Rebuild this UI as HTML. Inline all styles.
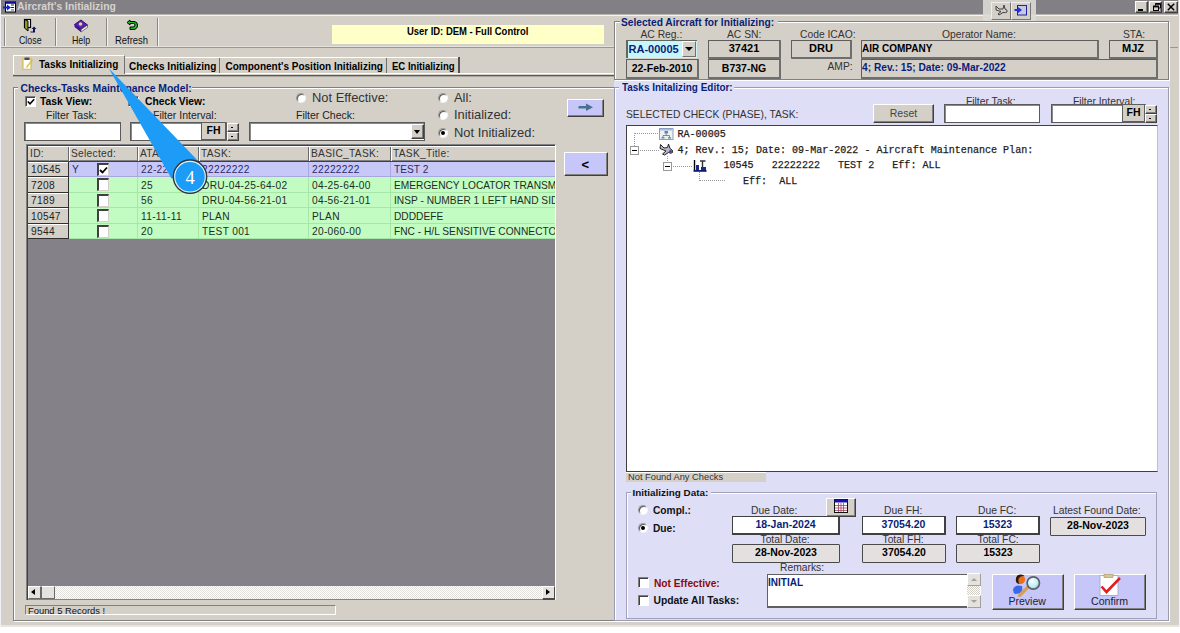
<!DOCTYPE html>
<html><head><meta charset="utf-8">
<style>
*{margin:0;padding:0;box-sizing:border-box}
html,body{width:1180px;height:633px;overflow:hidden;background:#fff;font-family:"Liberation Sans",sans-serif;font-size:10px;color:#000}
.a{position:absolute}
.win{left:0;top:0;width:1179px;height:627px;background:#D4D0C8;border-bottom:2px solid #E8E6E2}
.t{position:absolute;white-space:pre;line-height:1}
.b{font-weight:bold}
.nav{color:#0A1E78}
.etch-h{position:absolute;height:2px;border-top:1px solid #808080;border-bottom:1px solid #fff}
.etch-v{position:absolute;width:2px;border-left:1px solid #8A8884;border-right:1px solid #F4F2EE}
.sunk{position:absolute;background:#fff;border:1px solid #5A5A5A;box-shadow:inset 1px 1px 0 #8A8A8A}
.ro{position:absolute;background:#D4D0C8;border:1px solid #5E5E5E;border-right:2px solid #6E6E6E;border-bottom:2px solid #6E6E6E;border-radius:1px;text-align:center;font-weight:bold;font-size:11px;white-space:pre}
.btn{position:absolute;background:#D4D0C8;border-top:1px solid #fff;border-left:1px solid #fff;border-right:1px solid #404040;border-bottom:1px solid #404040;box-shadow:inset -1px -1px 0 #808080}
.rad{position:absolute;width:10px;height:10px;border-radius:50%;background:#fff;border:1px solid #9A9A9A;border-right-color:#F4F4F4;border-bottom-color:#F4F4F4;box-shadow:inset 1px 1px 0 #5A5A5A}
.dot{position:absolute;left:2px;top:2px;width:4px;height:4px;border-radius:50%;background:#000}
.gt{font-size:10.2px;letter-spacing:.3px}
.lab{font-size:10.3px;color:#333}
.mono{font-family:"Liberation Mono",monospace;font-size:10.05px;color:#111;font-weight:normal;-webkit-text-stroke:0.25px #333}
.dv{background:repeating-linear-gradient(#999 0 1px,transparent 1px 2px)}
.dh{background:repeating-linear-gradient(90deg,#999 0 1px,transparent 1px 2px)}
.mb{width:9px;height:9px;background:#fff;border:1px solid #999}
.mb::after{content:"";position:absolute;left:1px;top:3px;width:5px;height:1px;background:#000}
.wb{position:absolute;background:#fff;border:1px solid #404040;border-bottom-width:2px;border-right-width:2px;text-align:center;font-weight:bold;font-size:10.5px;line-height:15px}
.cb{position:absolute;width:11px;height:11px;background:#fff;border-top:1px solid #808080;border-left:1px solid #808080;border-bottom:1px solid #fff;border-right:1px solid #fff;box-shadow:inset 1px 1px 0 #404040}
.wbtn{position:absolute;width:13px;height:12px;background:#D4D0C8;border-top:1px solid #fff;border-left:1px solid #fff;border-right:1px solid #404040;border-bottom:1px solid #404040;box-shadow:inset -1px -1px 0 #808080}
.tb{font-size:10.5px;color:#111;transform-origin:0 0}
.lbtn{position:absolute;background:#C6C6F8;border-top:1px solid #fff;border-left:1px solid #fff;border-right:1px solid #404040;border-bottom:1px solid #404040;box-shadow:inset -1px -1px 0 #808080}
</style></head><body>
<div class="a win">

<!-- TITLE BAR -->
<div class="a" style="left:1px;top:0;width:1177px;height:14px;background:#828085"></div><div class="a" style="left:1px;top:14px;width:1177px;height:1px;background:#B8B6B2"></div>
<div class="a" style="left:0;top:0;width:1px;height:627px;background:#F0F0F8"></div><div class="a" style="left:1179px;top:15px;width:1px;height:612px;background:#F4F4F8"></div>
<div class="t b" style="left:17px;top:2px;font-size:10.4px;color:#D6D3CE">Aircraft's Initializing</div>

<!-- TOOLBAR -->
<div class="a" style="left:1px;top:15px;width:1177px;height:1px;background:#F4F4F2"></div>
<div class="etch-v" style="left:4px;top:18px;height:28px"></div>
<div class="etch-v" style="left:55px;top:18px;height:28px"></div>
<div class="etch-v" style="left:106px;top:18px;height:28px"></div>
<div class="etch-v" style="left:157px;top:18px;height:28px"></div>
<div class="a" style="left:1px;top:46px;width:613px;height:1px;background:#E4E2DC"></div><div class="a" style="left:1px;top:47px;width:613px;height:1px;background:#9C9890"></div>
<div class="t tb" style="left:18.5px;top:34.5px;transform:scaleX(.84)">Close</div>
<div class="t tb" style="left:72px;top:34.5px;transform:scaleX(.84)">Help</div>
<div class="t tb" style="left:115px;top:34.5px;transform:scaleX(.9)">Refresh</div>

<!-- user id -->
<div class="a" style="left:332px;top:25px;width:272px;height:19px;background:#FFFFC8"></div>
<div class="t b" style="left:407px;top:27px;font-size:10px;transform:scaleX(.946);transform-origin:0 0">User ID: DEM - Full Control</div>

<!-- TABS -->
<div class="a" style="left:125px;top:57px;width:334px;height:1px;background:#fff"></div>
<div class="a" style="left:219px;top:58px;width:1px;height:15px;background:#6E6E6E"></div>
<div class="a" style="left:386px;top:58px;width:1px;height:15px;background:#6E6E6E"></div>
<div class="a" style="left:458px;top:57px;width:2px;height:16px;background:#505050"></div>
<div class="a" style="left:13px;top:73px;width:601px;height:1px;background:#fff"></div>
<div class="a" style="left:13px;top:75px;width:601px;height:1px;background:#5A5A5A"></div>
<div class="a" style="left:13px;top:76px;width:601px;height:1px;background:#A8A6A0"></div>
<div class="a" style="left:13px;top:55px;width:112px;height:19px;background:#D4D0C8;border-top:1px solid #fff;border-left:1px solid #fff;border-right:1px solid #707070"></div>
<div class="t b" style="left:39px;top:60px;font-size:10px">Tasks Initializing</div>
<div class="t b" style="left:129px;top:62px;font-size:10px">Checks Initializing</div>
<div class="t b" style="left:225.5px;top:62px;font-size:10px">Component's Position Initializing</div>
<div class="t b" style="left:391.5px;top:62px;font-size:10px;transform:scaleX(.955);transform-origin:0 0">EC Initializing</div>

<!-- LEFT GROUP -->
<div class="a" style="left:13px;top:87px;width:602px;height:534px;border:1px solid #808080;box-shadow:inset 1px 1px 0 #fff, 1px 1px 0 #fff"></div>
<div class="a" style="left:18px;top:81px;width:174px;height:12px;background:#D4D0C8"></div>
<div class="t b nav" style="left:20.5px;top:83.5px;font-size:10.4px">Checks-Tasks Maintenance Model:</div>


<!-- LEFT CONTROLS -->
<div class="cb" style="left:25px;top:96px"></div>
<svg class="a" style="left:27px;top:98px" width="8" height="8" viewBox="0 0 8 8"><path d="M0.8 3.5 L3 5.8 L7.2 1.2" stroke="#000" stroke-width="1.6" fill="none"/></svg>
<div class="t b" style="left:40px;top:97px;font-size:10.3px">Task View:</div>
<div class="cb" style="left:128px;top:96px"></div>
<div class="t b" style="left:145px;top:97px;font-size:10.3px">Check View:</div>
<div class="t" style="left:46px;top:110px;font-size:10.5px;color:#222">Filter Task:</div>
<div class="t" style="left:153px;top:110px;font-size:10.5px;color:#222">Filter Interval:</div>
<div class="t" style="left:296px;top:110px;font-size:10.5px;color:#222">Filter Check:</div>
<div class="sunk" style="left:24px;top:122px;width:97px;height:19px"></div>
<div class="sunk" style="left:130px;top:122px;width:72px;height:19px"></div>
<div class="ro" style="left:201px;top:122px;width:26px;height:19px;font-size:10.5px;line-height:15px;border-color:#5E5E5E">FH</div>
<div class="btn" style="left:227px;top:123px;width:12px;height:9px"></div>
<div class="btn" style="left:227px;top:132px;width:12px;height:9px"></div>
<div class="sunk" style="left:249px;top:122px;width:176px;height:19px"></div>
<div class="btn" style="left:411px;top:124px;width:13px;height:15px"></div>
<div class="a" style="left:414px;top:130px;width:0;height:0;border-left:3.5px solid transparent;border-right:3.5px solid transparent;border-top:4px solid #000"></div>

<!-- radios -->
<div class="rad" style="left:296px;top:93px"></div>
<div class="t" style="left:312px;top:92px;font-size:12.9px;color:#333">Not Effective:</div>
<div class="rad" style="left:438px;top:93px"></div>
<div class="t" style="left:454px;top:92px;font-size:12.9px;color:#333">All:</div>
<div class="rad" style="left:438px;top:110px"></div>
<div class="t" style="left:454px;top:109px;font-size:12.9px;color:#333">Initialized:</div>
<div class="rad" style="left:438px;top:128px"><div class="dot"></div></div>
<div class="t" style="left:454px;top:127px;font-size:12.9px;color:#333">Not Initialized:</div>

<div class="lbtn" style="left:567px;top:99px;width:37px;height:18px"></div>
<div class="lbtn" style="left:564px;top:152px;width:44px;height:24px"></div>
<div class="t b" style="left:581.5px;top:157.5px;font-size:13px">&lt;</div>

<!-- GRID -->
<div class="a" style="left:26px;top:144px;width:530px;height:456px;background:#848288;border-top:1px solid #808080;border-left:1px solid #808080;border-right:1px solid #fff;box-shadow:inset 1px 1px 0 #404040"></div>
<div class="a" style="left:28px;top:146px;width:527px;height:93px;overflow:hidden">
<div class="a" style="left:0;top:0;width:528px;height:16px;background:#D4D0C8;border-top:1px solid #fff;border-bottom:1px solid #404040;box-shadow:inset 0 -1px 0 #808080"></div>
<div class="t gt" style="left:2px;top:3px;color:#333">ID:</div>
<div class="a" style="left:40px;top:1px;width:1px;height:14px;background:#6A6A6A"></div>
<div class="a" style="left:41px;top:1px;width:1px;height:14px;background:#fff"></div>
<div class="t gt" style="left:43px;top:3px;color:#333">Selected:</div>
<div class="a" style="left:109px;top:1px;width:1px;height:14px;background:#6A6A6A"></div>
<div class="a" style="left:110px;top:1px;width:1px;height:14px;background:#fff"></div>
<div class="t gt" style="left:112px;top:3px;color:#333">ATA:</div>
<div class="a" style="left:170px;top:1px;width:1px;height:14px;background:#6A6A6A"></div>
<div class="a" style="left:171px;top:1px;width:1px;height:14px;background:#fff"></div>
<div class="t gt" style="left:173px;top:3px;color:#333">TASK:</div>
<div class="a" style="left:280px;top:1px;width:1px;height:14px;background:#6A6A6A"></div>
<div class="a" style="left:281px;top:1px;width:1px;height:14px;background:#fff"></div>
<div class="t gt" style="left:283px;top:3px;color:#333">BASIC_TASK:</div>
<div class="a" style="left:362px;top:1px;width:1px;height:14px;background:#6A6A6A"></div>
<div class="a" style="left:363px;top:1px;width:1px;height:14px;background:#fff"></div>
<div class="t gt" style="left:365px;top:3px;color:#333">TASK_Title:</div>
<div class="a" style="left:0;top:16px;width:41px;height:15px;background:#D4D0C8;border-bottom:1px solid #303030;border-right:1px solid #303030;box-shadow:inset 0 1px 0 #fff"></div>
<div class="a" style="left:41px;top:16px;width:487px;height:15px;background:#C8C8F8;border-bottom:1px solid #A8A8E0"></div>
<div class="a" style="left:109px;top:16px;width:1px;height:15px;background:#A8A8E0"></div>
<div class="a" style="left:170px;top:16px;width:1px;height:15px;background:#A8A8E0"></div>
<div class="a" style="left:280px;top:16px;width:1px;height:15px;background:#A8A8E0"></div>
<div class="a" style="left:362px;top:16px;width:1px;height:15px;background:#A8A8E0"></div>
<div class="t gt" style="left:3px;top:19px;color:#222">10545</div>
<div class="t gt" style="left:44px;top:19px;color:#2A2A66">Y</div>
<div class="a" style="left:69px;top:17px;width:12px;height:13px;background:#fff;border-top:2px solid #404040;border-left:2px solid #404040;border-right:1px solid #D4D0C8;border-bottom:1px solid #D4D0C8"></div>
<svg class="a" style="left:71px;top:19.5px" width="9" height="9" viewBox="0 0 9 9"><path d="M1 4 L3.5 6.5 L8 1.5" stroke="#000" stroke-width="1.8" fill="none"/></svg>
<div class="t gt" style="left:113px;top:19px;width:57px;overflow:hidden;color:#2A2A66">22-22-22</div>
<div class="t gt" style="left:174px;top:19px;width:106px;overflow:hidden;color:#2A2A66">22222222</div>
<div class="t gt" style="left:284px;top:19px;width:78px;overflow:hidden;color:#2A2A66">22222222</div>
<div class="t gt" style="left:366px;top:19px;width:162px;overflow:hidden;letter-spacing:0;color:#2A2A66">TEST 2</div>
<div class="a" style="left:0;top:31px;width:41px;height:16px;background:#D4D0C8;border-bottom:1px solid #303030;border-right:1px solid #303030;box-shadow:inset 0 1px 0 #fff"></div>
<div class="a" style="left:41px;top:31px;width:487px;height:16px;background:#C2FCC2;border-bottom:1px solid #A6E6A6"></div>
<div class="a" style="left:109px;top:31px;width:1px;height:16px;background:#A6E6A6"></div>
<div class="a" style="left:170px;top:31px;width:1px;height:16px;background:#A6E6A6"></div>
<div class="a" style="left:280px;top:31px;width:1px;height:16px;background:#A6E6A6"></div>
<div class="a" style="left:362px;top:31px;width:1px;height:16px;background:#A6E6A6"></div>
<div class="t gt" style="left:3px;top:34.5px;color:#222">7208</div>
<div class="a" style="left:69px;top:32px;width:12px;height:13px;background:#fff;border-top:2px solid #404040;border-left:2px solid #404040;border-right:1px solid #D4D0C8;border-bottom:1px solid #D4D0C8"></div>
<div class="t gt" style="left:113px;top:34.5px;width:57px;overflow:hidden;color:#1E2E1E">25</div>
<div class="t gt" style="left:174px;top:34.5px;width:106px;overflow:hidden;color:#1E2E1E">DRU-04-25-64-02</div>
<div class="t gt" style="left:284px;top:34.5px;width:78px;overflow:hidden;color:#1E2E1E">04-25-64-00</div>
<div class="t gt" style="left:366px;top:34.5px;width:162px;overflow:hidden;letter-spacing:0;color:#1E2E1E">EMERGENCY LOCATOR TRANSMITTER</div>
<div class="a" style="left:0;top:47px;width:41px;height:15px;background:#D4D0C8;border-bottom:1px solid #303030;border-right:1px solid #303030;box-shadow:inset 0 1px 0 #fff"></div>
<div class="a" style="left:41px;top:47px;width:487px;height:15px;background:#C2FCC2;border-bottom:1px solid #A6E6A6"></div>
<div class="a" style="left:109px;top:47px;width:1px;height:15px;background:#A6E6A6"></div>
<div class="a" style="left:170px;top:47px;width:1px;height:15px;background:#A6E6A6"></div>
<div class="a" style="left:280px;top:47px;width:1px;height:15px;background:#A6E6A6"></div>
<div class="a" style="left:362px;top:47px;width:1px;height:15px;background:#A6E6A6"></div>
<div class="t gt" style="left:3px;top:50px;color:#222">7189</div>
<div class="a" style="left:69px;top:48px;width:12px;height:13px;background:#fff;border-top:2px solid #404040;border-left:2px solid #404040;border-right:1px solid #D4D0C8;border-bottom:1px solid #D4D0C8"></div>
<div class="t gt" style="left:113px;top:50px;width:57px;overflow:hidden;color:#1E2E1E">56</div>
<div class="t gt" style="left:174px;top:50px;width:106px;overflow:hidden;color:#1E2E1E">DRU-04-56-21-01</div>
<div class="t gt" style="left:284px;top:50px;width:78px;overflow:hidden;color:#1E2E1E">04-56-21-01</div>
<div class="t gt" style="left:366px;top:50px;width:162px;overflow:hidden;letter-spacing:0;color:#1E2E1E">INSP - NUMBER 1 LEFT HAND SIDE</div>
<div class="a" style="left:0;top:62px;width:41px;height:16px;background:#D4D0C8;border-bottom:1px solid #303030;border-right:1px solid #303030;box-shadow:inset 0 1px 0 #fff"></div>
<div class="a" style="left:41px;top:62px;width:487px;height:16px;background:#C2FCC2;border-bottom:1px solid #A6E6A6"></div>
<div class="a" style="left:109px;top:62px;width:1px;height:16px;background:#A6E6A6"></div>
<div class="a" style="left:170px;top:62px;width:1px;height:16px;background:#A6E6A6"></div>
<div class="a" style="left:280px;top:62px;width:1px;height:16px;background:#A6E6A6"></div>
<div class="a" style="left:362px;top:62px;width:1px;height:16px;background:#A6E6A6"></div>
<div class="t gt" style="left:3px;top:65.5px;color:#222">10547</div>
<div class="a" style="left:69px;top:63px;width:12px;height:13px;background:#fff;border-top:2px solid #404040;border-left:2px solid #404040;border-right:1px solid #D4D0C8;border-bottom:1px solid #D4D0C8"></div>
<div class="t gt" style="left:113px;top:65.5px;width:57px;overflow:hidden;color:#1E2E1E">11-11-11</div>
<div class="t gt" style="left:174px;top:65.5px;width:106px;overflow:hidden;color:#1E2E1E">PLAN</div>
<div class="t gt" style="left:284px;top:65.5px;width:78px;overflow:hidden;color:#1E2E1E">PLAN</div>
<div class="t gt" style="left:366px;top:65.5px;width:162px;overflow:hidden;letter-spacing:0;color:#1E2E1E">DDDDEFE</div>
<div class="a" style="left:0;top:78px;width:41px;height:15px;background:#D4D0C8;border-bottom:1px solid #303030;border-right:1px solid #303030;box-shadow:inset 0 1px 0 #fff"></div>
<div class="a" style="left:41px;top:78px;width:487px;height:15px;background:#C2FCC2;border-bottom:1px solid #A6E6A6"></div>
<div class="a" style="left:109px;top:78px;width:1px;height:15px;background:#A6E6A6"></div>
<div class="a" style="left:170px;top:78px;width:1px;height:15px;background:#A6E6A6"></div>
<div class="a" style="left:280px;top:78px;width:1px;height:15px;background:#A6E6A6"></div>
<div class="a" style="left:362px;top:78px;width:1px;height:15px;background:#A6E6A6"></div>
<div class="t gt" style="left:3px;top:81px;color:#222">9544</div>
<div class="a" style="left:69px;top:79px;width:12px;height:13px;background:#fff;border-top:2px solid #404040;border-left:2px solid #404040;border-right:1px solid #D4D0C8;border-bottom:1px solid #D4D0C8"></div>
<div class="t gt" style="left:113px;top:81px;width:57px;overflow:hidden;color:#1E2E1E">20</div>
<div class="t gt" style="left:174px;top:81px;width:106px;overflow:hidden;color:#1E2E1E">TEST 001</div>
<div class="t gt" style="left:284px;top:81px;width:78px;overflow:hidden;color:#1E2E1E">20-060-00</div>
<div class="t gt" style="left:366px;top:81px;width:162px;overflow:hidden;letter-spacing:0;color:#1E2E1E">FNC - H/L SENSITIVE CONNECTOR</div>
</div>
<div class="a" style="left:28px;top:586px;width:527px;height:13px;background:repeating-conic-gradient(#fff 0 25%, #E2E0DC 0 50%) 0 0/2px 2px"></div>
<div class="a" style="left:28px;top:586px;width:13px;height:13px;background:#E4E2DE;border-right:1px solid #6A6A6A;border-bottom:1px solid #6A6A6A;border-top:1px solid #fff;border-left:1px solid #fff"></div>
<div class="a" style="left:31px;top:589px;width:0;height:0;border-top:3.5px solid transparent;border-bottom:3.5px solid transparent;border-right:4px solid #000"></div>
<div class="a" style="left:41px;top:586px;width:14px;height:13px;background:#E4E2DE;border-right:1px solid #6A6A6A;border-bottom:1px solid #6A6A6A;border-left:1px solid #6A6A6A;border-top:1px solid #fff"></div>
<div class="a" style="left:542px;top:586px;width:13px;height:14px;background:#E4E2DE;border-right:1px solid #4A4A4A;border-bottom:2px solid #4A4A4A;border-top:1px solid #fff;border-left:1px solid #fff"></div>
<div class="a" style="left:546px;top:589px;width:0;height:0;border-top:3.5px solid transparent;border-bottom:3.5px solid transparent;border-left:4px solid #000"></div>
<div class="a" style="left:25px;top:605px;width:311px;height:10px;background:#D4D0C8;border-top:1px solid #808080;border-left:1px solid #808080;border-bottom:1px solid #fff;border-right:1px solid #fff"></div>
<div class="t" style="left:28px;top:605.5px;font-size:9.4px;color:#111">Found 5 Records !</div>

<!-- RIGHT TOP GROUP -->
<div class="a" style="left:614px;top:21px;width:555px;height:59px;border:1px solid #808080;box-shadow:inset 1px 1px 0 #fff, 1px 1px 0 #fff"></div>
<div class="a" style="left:620px;top:16px;width:158px;height:12px;background:#D4D0C8"></div>
<div class="t b nav" style="left:621px;top:18px;font-size:10.2px">Selected Aircraft for Initializing:</div>
<div class="t lab" style="left:640.5px;top:30px">AC Reg.:</div>
<div class="t lab" style="left:727px;top:30px">AC SN:</div>
<div class="t lab" style="left:800px;top:30px">Code ICAO:</div>
<div class="t lab" style="left:942px;top:30px">Operator Name:</div>
<div class="t lab" style="left:1123px;top:30px">STA:</div>
<div class="t lab" style="left:827.5px;top:62px">AMP:</div>
<div class="a" style="left:626px;top:40px;width:71px;height:18px;background:#C8F6FF;border-top:1px solid #606860;border-left:2px solid #606860"></div>
<div class="a" style="left:682px;top:41px;width:14px;height:16px;background:#D4D0C8;border-top:1px solid #fff;border-left:1px solid #fff;border-right:1px solid #707070;border-bottom:1px solid #707070"></div>
<div class="a" style="left:685px;top:47px;width:0;height:0;border-left:4px solid transparent;border-right:4px solid transparent;border-top:4px solid #000"></div>
<div class="t b nav" style="left:628.5px;top:44px;font-size:11px">RA-00005</div>
<div class="ro" style="left:708px;top:40px;width:73px;height:19px;line-height:15px">37421</div>
<div class="ro" style="left:791px;top:40px;width:61px;height:19px;line-height:15px">DRU</div>
<div class="ro" style="left:861px;top:40px;width:238px;height:19px;line-height:15px;text-align:left;padding-left:0;font-size:10px">AIR COMPANY</div>
<div class="ro" style="left:1109px;top:40px;width:49px;height:19px;line-height:15px">MJZ</div>
<div class="ro" style="left:626px;top:59px;width:73px;height:20px;line-height:16px;font-size:10.5px">22-Feb-2010</div>
<div class="ro" style="left:708px;top:59px;width:73px;height:20px;line-height:16px;font-size:10.5px">B737-NG</div>
<div class="ro nav" style="left:861px;top:59px;width:297px;height:20px;line-height:16px;text-align:left;padding-left:0;font-size:10.2px">4; Rev.: 15; Date: 09-Mar-2022</div>

<!-- RIGHT EDITOR PANEL -->
<div class="a" style="left:614px;top:81px;width:556px;height:540px;background:#DEDEF6"></div>
<div class="a" style="left:614px;top:87px;width:555px;height:534px;border:1px solid #9C9CB0;box-shadow:inset 1px 1px 0 #fff, 1px 1px 0 #fff"></div>
<div class="a" style="left:619px;top:82px;width:115px;height:12px;background:#DEDEF6"></div>
<div class="t b nav" style="left:621.5px;top:82.5px;font-size:10.3px;transform:scaleX(.964);transform-origin:0 0">Tasks Initalizing Editor:</div>
<div class="t" style="left:626px;top:110px;font-size:10.3px;color:#333">SELECTED CHECK (PHASE), TASK:</div>
<div class="btn" style="left:873px;top:104px;width:61px;height:19px;color:#444;font-size:10.5px;text-align:center;line-height:16px">Reset</div>
<div class="t lab" style="left:966px;top:96.5px">Filter Task:</div>
<div class="t lab" style="left:1073px;top:96.5px">Filter Interval:</div>
<div class="sunk" style="left:944px;top:104px;width:96px;height:19px"></div>
<div class="sunk" style="left:1051px;top:104px;width:73px;height:19px"></div>
<div class="ro" style="left:1122px;top:104px;width:24px;height:19px;font-size:10.5px;line-height:15px;border-color:#5E5E5E">FH</div>
<div class="btn" style="left:1145px;top:105px;width:12px;height:9px"></div>
<div class="btn" style="left:1145px;top:114px;width:12px;height:9px"></div>

<!-- tree -->
<div class="a" style="left:626px;top:125px;width:532px;height:347px;background:#fff;border-top:1px solid #404040;border-left:1px solid #404040;border-bottom:1px solid #404040;border-right:1px solid #C0C0C0"></div>
<div class="t mono" style="left:677.5px;top:130px">RA-00005</div>
<div class="t mono" style="left:677.5px;top:146px">4; Rev.: 15; Date: 09-Mar-2022 - Aircraft Maintenance Plan:</div>
<div class="t mono" style="left:723.5px;top:161px">10545   22222222   TEST 2   Eff: ALL</div>
<div class="t mono" style="left:743px;top:176.5px">Eff:  ALL</div>
<div class="a dv" style="left:634px;top:133px;width:1px;height:13px"></div>
<div class="a dh" style="left:635px;top:133px;width:24px;height:1px"></div>
<div class="a dh" style="left:638px;top:150px;width:21px;height:1px"></div>
<div class="a dv" style="left:667px;top:156px;width:1px;height:6px"></div>
<div class="a dh" style="left:671px;top:166px;width:22px;height:1px"></div>
<div class="a dv" style="left:699px;top:172px;width:1px;height:9px"></div>
<div class="a dh" style="left:700px;top:180px;width:25px;height:1px"></div>
<div class="a mb" style="left:630px;top:146px"></div>
<div class="a mb" style="left:663px;top:162px"></div>

<div class="a" style="left:626px;top:472px;width:140px;height:10px;background:#D4D0C8;border-top:1px solid #fff"></div>
<div class="t" style="left:628px;top:472.5px;font-size:9.3px;color:#333">Not Found Any Checks</div>

<!-- Initializing data group -->
<div class="a" style="left:626px;top:492px;width:531px;height:127px;border:1px solid #A0A0B8;box-shadow:inset 1px 1px 0 #fff"></div>
<div class="a" style="left:631px;top:486px;width:80px;height:12px;background:#DEDEF6"></div>
<div class="t b" style="left:632.5px;top:487.5px;font-size:9.9px;color:#111">Initializing Data:</div>
<div class="rad" style="left:638px;top:505px"></div>
<div class="t b" style="left:653px;top:506px;font-size:10.2px;color:#111">Compl.:</div>
<div class="rad" style="left:638px;top:523px"><div class="dot"></div></div>
<div class="t b" style="left:653px;top:523.5px;font-size:10.2px;color:#111">Due:</div>
<div class="t lab" style="left:751px;top:506px">Due Date:</div>
<div class="t lab" style="left:884px;top:506px">Due FH:</div>
<div class="t lab" style="left:978px;top:506px">Due FC:</div>
<div class="t lab" style="left:1053px;top:506px">Latest Found Date:</div>
<div class="t lab" style="left:760.5px;top:534.5px">Total Date:</div>
<div class="t lab" style="left:882.5px;top:534.5px">Total FH:</div>
<div class="t lab" style="left:977.5px;top:534.5px">Total FC:</div>
<div class="t lab" style="left:780px;top:563px">Remarks:</div>
<div class="btn" style="left:826px;top:498px;width:30px;height:19px"></div>
<div class="wb nav" style="left:732px;top:516px;width:108px;height:19px">18-Jan-2024</div>
<div class="wb nav" style="left:862px;top:516px;width:84px;height:19px">37054.20</div>
<div class="wb nav" style="left:956px;top:516px;width:84px;height:19px">15323</div>
<div class="ro" style="left:1050px;top:517px;width:96px;height:19px;line-height:15px;background:#E4E0E0;border:1px solid #4A4A4A;border-bottom-width:1.5px;line-height:15px;font-size:10.5px">28-Nov-2023</div>
<div class="ro" style="left:732px;top:544px;width:108px;height:19px;line-height:15px;background:#E4E0E0;border:1px solid #4A4A4A;border-bottom-width:1.5px;line-height:15px;font-size:10.5px">28-Nov-2023</div>
<div class="ro" style="left:862px;top:544px;width:84px;height:19px;line-height:15px;background:#E4E0E0;border:1px solid #4A4A4A;border-bottom-width:1.5px;line-height:15px;font-size:10.5px">37054.20</div>
<div class="ro" style="left:956px;top:544px;width:84px;height:19px;line-height:15px;background:#E4E0E0;border:1px solid #4A4A4A;border-bottom-width:1.5px;line-height:15px;font-size:10.5px">15323</div>
<div class="a" style="left:767px;top:574px;width:200px;height:34px;background:#fff;border:1px solid #606060;border-right:none;border-bottom-width:2px"></div>
<div class="t b nav" style="left:768px;top:578px;font-size:10px">INITIAL</div>
<div class="a" style="left:967px;top:573px;width:14px;height:35px;background:repeating-conic-gradient(#fff 0 25%, #D4D0C8 0 50%) 0 0/2px 2px;border-right:1px solid #fff"></div>
<div class="a" style="left:967px;top:573px;width:14px;height:13px;background:#E4E2DE;border:1px solid;border-color:#fff #A0A0A0 #A0A0A0 #fff"></div>
<div class="a" style="left:967px;top:595px;width:14px;height:13px;background:#E4E2DE;border:1px solid;border-color:#fff #A0A0A0 #A0A0A0 #fff"></div>
<div class="a" style="left:971px;top:578px;width:0;height:0;border-left:3px solid transparent;border-right:3px solid transparent;border-bottom:3px solid #A0A0A0"></div>
<div class="a" style="left:971px;top:600px;width:0;height:0;border-left:3px solid transparent;border-right:3px solid transparent;border-top:3px solid #A0A0A0"></div>
<div class="cb" style="left:638px;top:577px"></div>
<div class="t b" style="left:653.5px;top:578.5px;font-size:10.3px;color:#8B0A0A;transform:scaleX(.99);transform-origin:0 0">Not Effective:</div>
<div class="cb" style="left:638px;top:595px"></div>
<div class="t b" style="left:653.5px;top:595.5px;font-size:10.35px;color:#111">Update All Tasks:</div>
<div class="lbtn" style="left:992px;top:574px;width:72px;height:36px"></div>
<div class="t" style="left:1008.5px;top:596px;font-size:10.5px;color:#223">Preview</div>
<div class="lbtn" style="left:1074px;top:574px;width:72px;height:36px"></div>
<div class="t" style="left:1091px;top:596px;font-size:10.6px;color:#223">Confirm</div>


<div class="a" style="left:231px;top:127px;width:2px;height:1px;background:#000"></div>
<div class="a" style="left:231px;top:136px;width:2px;height:1px;background:#000"></div>
<div class="a" style="left:1149px;top:109px;width:2px;height:1px;background:#000"></div>
<div class="a" style="left:1149px;top:118px;width:2px;height:1px;background:#000"></div>
<div class="a" style="left:1170px;top:47px;width:8px;height:1px;background:#9C9890"></div>
<!-- ICONS -->
<svg class="a" style="left:2px;top:1px" width="14" height="12" viewBox="0 0 14 12">
<rect x="3.5" y="1" width="10" height="10" fill="#fff" stroke="#000" stroke-width="1"/>
<rect x="3.5" y="0.8" width="10" height="2" fill="#1010A0"/>
<rect x="9" y="3.5" width="3" height="1" fill="#222"/><rect x="9" y="6" width="3" height="1" fill="#222"/><rect x="9" y="8.5" width="3" height="1" fill="#555"/>
<path d="M1 5.5 H5 V3.5 L9 6.5 L5 9.5 V7.5 H1 Z" fill="#1020E0"/>
</svg>
<svg class="a" style="left:21.5px;top:18px" width="15" height="16" viewBox="0 0 15 16">
<rect x="2.5" y="1.5" width="6" height="8" fill="#fff" stroke="#000" stroke-width="1.2"/>
<path d="M2.5 1.5 L6 3 L6 13 L2.5 10 Z" fill="#8C9A1C" stroke="#000" stroke-width="1"/>
<path d="M8.5 13.5 H11 V11 H9.5 L12 8.5 L14.5 11 H13 V14.5 H8.5 Z" fill="#101060"/>
</svg>
<svg class="a" style="left:73px;top:19px" width="16" height="14" viewBox="0 0 16 14">
<path d="M1.5 5.5 L8 1 L14.5 6 L8 10.5 Z" fill="#5A20B0" stroke="#2A1070" stroke-width="1"/>
<path d="M1.5 5.5 L1.5 8 L8 13 L8 10.5 Z" fill="#3A1090"/>
<path d="M8 10.5 L14.5 6 L14.5 8.5 L8 13 Z" fill="#eee" stroke="#333" stroke-width=".6"/>
<circle cx="7.5" cy="5" r="1.8" fill="#E8D090"/>
</svg>
<svg class="a" style="left:126px;top:19px" width="13" height="13" viewBox="0 0 13 13">
<path d="M1 3.5 L4 1 L4 2.5 L8 2.5 Q11.5 2.5 11.5 6 Q11.5 10.5 7 10.5 L4 10.5 L4 8 L7 8 Q9 8 9 6 Q9 4.5 7.5 4.5 L4 4.5 L4 6 Z" fill="#20C020" stroke="#000" stroke-width="1"/>
</svg>
<svg class="a" style="left:20.5px;top:56px" width="13" height="15" viewBox="0 0 13 15">
<rect x="1.5" y="2.5" width="9" height="11" fill="#E8D890" stroke="#D8C070" stroke-width="1"/>
<rect x="3" y="4" width="6" height="8.5" fill="#fff"/>
<rect x="3.5" y="1.5" width="5" height="2.5" fill="#4A4A55"/>
<path d="M5 11 L11 3 L12 4 L6 12 Z" fill="#D0C050"/>
</svg>

<!-- title bar right icons -->
<div class="a" style="left:983px;top:0;width:53px;height:21px;background:#DCD9D3;opacity:.9"></div>
<div class="btn" style="left:991px;top:2px;width:20px;height:18px;border-color:#eee #777 #777 #eee;box-shadow:none"></div>
<div class="btn" style="left:1011px;top:2px;width:20px;height:18px;border-color:#eee #777 #777 #eee;box-shadow:none"></div>
<svg class="a" style="left:994px;top:4px" width="15" height="13" viewBox="0 0 15 13">
<path d="M2 2 L5 5 L9 5 L10 1 L11 5 Q14 6 13 8 Q12 9 9 8.5 L5 11 L4 10 L7 7.5 L2 6 Z" fill="#ccc" stroke="#333" stroke-width=".9"/>
</svg>
<svg class="a" style="left:1014px;top:5px" width="13" height="11" viewBox="0 0 13 11">
<rect x="3.5" y="0.5" width="9" height="9.5" fill="#C8C8E0" stroke="#2020A0" stroke-width="1"/>
<path d="M0.5 4 H4 V2 L8 5 L4 8 V6 H0.5 Z" fill="#2030E0"/>
</svg>

<!-- window buttons -->
<div class="wbtn" style="left:1135px;top:1px"></div>
<div class="wbtn" style="left:1149px;top:1px"></div>
<div class="wbtn" style="left:1164px;top:1px;width:14px"></div>
<div class="a" style="left:1138px;top:8.5px;width:5px;height:2px;background:#000"></div>
<svg class="a" style="left:1152.5px;top:2.5px" width="8" height="8" viewBox="0 0 8 8"><path d="M2.5 0.5 H7.5 V5 H6 M2.5 0.5 V2.5 M2.5 1.3 H7.5" stroke="#000" fill="none" stroke-width="1"/><rect x="0.5" y="3" width="5" height="4.5" stroke="#000" fill="none" stroke-width="1"/><rect x="0.5" y="3" width="5" height="1.4" fill="#000"/></svg>
<svg class="a" style="left:1167px;top:2.5px" width="8" height="8" viewBox="0 0 8 8"><path d="M0.8 0.8 L7.2 7.2 M7.2 0.8 L0.8 7.2" stroke="#000" stroke-width="1.5"/></svg>

<!-- arrow button icon -->
<svg class="a" style="left:578px;top:103px" width="16" height="9" viewBox="0 0 16 9"><path d="M0.5 3 H8 V0.5 L15 4.3 L8 8 V5.5 H0.5 Z" fill="#4A7090"/></svg>

<!-- tree icons -->
<svg class="a" style="left:659px;top:128px" width="15" height="12" viewBox="0 0 15 12">
<rect x="0.5" y="0.5" width="13.5" height="11" fill="#EEF2E8" stroke="#8AA0C0" stroke-width="1"/>
<rect x="1" y="1" width="12.5" height="1.5" fill="#A8BCE0"/>
<rect x="5.5" y="3" width="3.5" height="2.5" fill="#5A82C8"/>
<path d="M7.2 5.5 V7.5 M4 7.5 H10.5 M4 7.5 V9 M10.5 7.5 V9" stroke="#5A82C8" stroke-width=".9"/>
<rect x="2.5" y="9" width="3" height="1.6" fill="#6A90D0"/><rect x="9" y="9" width="3" height="1.6" fill="#6A90D0"/>
</svg>
<svg class="a" style="left:659px;top:143px" width="15" height="13" viewBox="0 0 15 13">
<path d="M1.5 1.5 L5 5 L8.5 4.5 L9.5 1 L11 5.5 Q14.5 7 13.5 9.5 Q12 11 9.5 9.5 L5.5 12 L3.5 11 L7 8 L1 5.5 Z" fill="#B8B8C8" stroke="#222" stroke-width="1"/>
<circle cx="11.5" cy="8.5" r="1.6" fill="#4A4A90"/>
</svg>
<svg class="a" style="left:693px;top:159px" width="14" height="13" viewBox="0 0 14 13">
<path d="M1.5 1 V11" stroke="#000" stroke-width="1.4"/>
<path d="M7 2 H12.5 M9.5 2 V11" stroke="#333" stroke-width="1.4"/>
<rect x="3" y="6" width="3" height="5" fill="#1A2A8A"/>
<path d="M0.5 11 H13.5 V12.8 H0.5 Z" fill="#101A70"/>
<path d="M8 8 H13 V11 H8 Z" fill="#1A2A8A"/>
</svg>

<!-- calendar -->
<svg class="a" style="left:834px;top:499px" width="14" height="14" viewBox="0 0 14 14">
<rect x="0.5" y="0.5" width="13" height="13" fill="#fff" stroke="#111" stroke-width="1"/>
<rect x="0.5" y="0.5" width="13" height="3" fill="#1A10B0"/>
<path d="M4.5 4 V13 M7 4 V13 M9.5 4 V13 M1 6.5 H13 M1 9 H13 M1 11.5 H13" stroke="#A04060" stroke-width=".8"/>
</svg>

<!-- preview icon -->
<svg class="a" style="left:1010px;top:574px" width="32" height="25" viewBox="0 0 32 25">
<defs><radialGradient id="lg" cx=".4" cy=".35" r=".7"><stop offset="0" stop-color="#F4FFFF"/><stop offset=".6" stop-color="#C8ECF8"/><stop offset="1" stop-color="#90C8E0"/></radialGradient></defs>
<path d="M3 16 Q3.5 12 8 11.5 L12 12 Q13 16 11 19 L5.5 20 Q3 19 3 16 Z" fill="#3A6AE8"/>
<path d="M9.5 21.5 L17.5 13.5" stroke="#D0A060" stroke-width="3.2" stroke-linecap="round"/>
<circle cx="10.5" cy="5.5" r="4.6" fill="#E8701C"/>
<path d="M5.8 6.5 Q5.5 0.5 11 0.5 Q13.5 0.5 14.5 2 Q10 1.5 8.5 5 Q8 8 9.5 10 Q6 9.5 5.8 6.5 Z" fill="#2A1808"/>
<circle cx="23.3" cy="9" r="6.2" fill="url(#lg)" stroke="#5A6068" stroke-width="1.7"/>
</svg>

<!-- confirm icon -->
<svg class="a" style="left:1098px;top:574px" width="24" height="23" viewBox="0 0 24 23">
<rect x="2" y="1.5" width="18" height="20" fill="#fff" stroke="#A8B0D0" stroke-width="1"/>
<rect x="6" y="0.5" width="9" height="3" fill="#D8C890" stroke="#A09060" stroke-width=".6"/>
<path d="M3.5 12.5 L8.5 18 L22 4" stroke="#E02020" stroke-width="2.6" fill="none"/>
</svg>

<!-- Callout -->
<svg class="a" style="left:0;top:0" width="1180" height="633" viewBox="0 0 1180 633">
<path d="M108.8 68.3 L171.5 178.5 L190 176.7 L196.8 159.5 Z" fill="#1C9CF6"/>
<circle cx="190" cy="176.7" r="16.6" fill="#1C9CF6" stroke="#333" stroke-width="1.5"/>
<circle cx="190" cy="176.7" r="15.3" fill="none" stroke="#fff" stroke-width="1.1" opacity=".85"/>
<text x="190" y="183.8" text-anchor="middle" font-family="Liberation Serif" font-size="18.5" fill="#fff">4</text>
</svg>

</div>
</body></html>
